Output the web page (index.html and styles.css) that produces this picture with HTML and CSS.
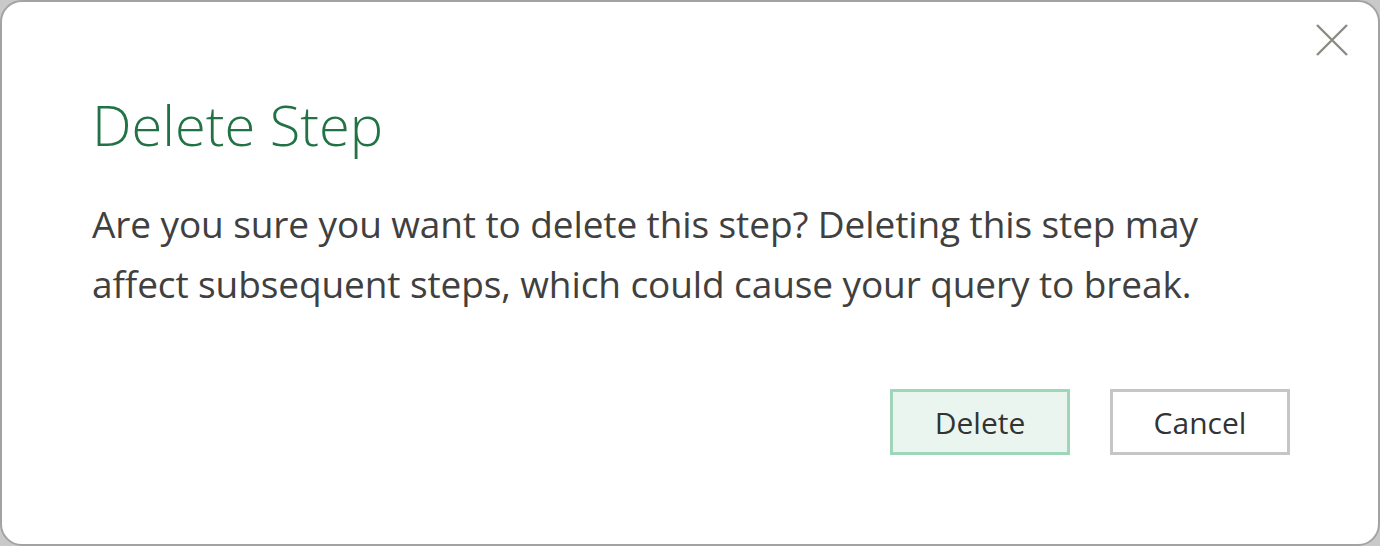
FILE: index.html
```html
<!DOCTYPE html>
<html>
<head>
    <title>Delete Step</title>
    <link rel="stylesheet" href="styles.css">
</head>
<body>
    <div class="dialog">
        <button class="close" aria-label="Close">
            <svg width="32" height="32" viewBox="0 0 32 32">
                <path d="M1 1 L31 31 M31 1 L1 31" stroke="#8a8c82" stroke-width="2.4" fill="none"/>
            </svg>
        </button>
        <h1 class="title">Delete Step</h1>
        <p class="message">Are you sure you want to delete this step? Deleting this step may affect subsequent steps, which could cause your query to break.</p>
        <div class="actions">
            <button class="btn btn-primary">Delete</button>
            <button class="btn">Cancel</button>
        </div>
    </div>
</body>
</html>
```

FILE: styles.css
```css
html, body {
    margin: 0;
    padding: 0;
    height: 100%;
}
body {
    background-color: #c9c9c9;
    font-family: "Open Sans", "Noto Sans", sans-serif;
    overflow: hidden;
}
.dialog {
    position: relative;
    box-sizing: border-box;
    width: 1380px;
    height: 546px;
    background: #fff;
    border: 2px solid #a3a3a3;
    border-radius: 22px;
    padding: 86px 88px 0 90px;
}
.close {
    position: absolute;
    top: 22px;
    right: 30px;
    background: none;
    border: none;
    padding: 0;
    cursor: pointer;
    line-height: 0;
}
.title {
    margin: 0;
    font-weight: 300;
    font-size: 56px;
    line-height: 72px;
    color: #217346;
}
.message {
    margin: 34px 0 0 0;
    font-size: 37px;
    letter-spacing: -0.1px;
    line-height: 60px;
    color: #404040;
    width: 1180px;
}
.actions {
    display: flex;
    justify-content: flex-end;
    gap: 40px;
    margin-top: 75px;
}
.btn {
    box-sizing: border-box;
    width: 180px;
    height: 66px;
    font-family: "Open Sans", "Noto Sans", sans-serif;
    font-size: 30px;
    color: #333;
    background: #fff;
    border: 3px solid #c6c6c6;
    cursor: pointer;
}
.btn-primary {
    background: #ebf5ef;
    border-color: #9fd5b8;
}
```
